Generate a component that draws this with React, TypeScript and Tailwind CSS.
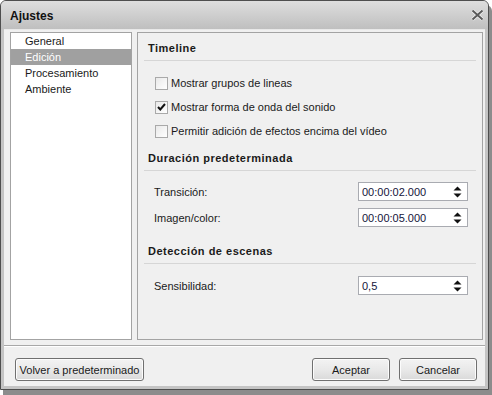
import React from "react";

const font = { fontFamily: '"Liberation Sans", Arial, sans-serif' };

function Check({ checked, label }: { checked?: boolean; label: string }) {
  return (
    <div className="h-[24px] flex items-center pl-[11px]">
      <div className="w-[13px] h-[13px] border border-[#a9a9a9] bg-gradient-to-br from-[#e9e9e9] to-white flex items-center justify-center">
        {checked && (
          <svg width="9" height="8" viewBox="0 0 9 8">
            <path d="M1 4 L3.3 6.5 L8 1" stroke="#111" strokeWidth="2" fill="none" strokeLinejoin="miter" />
          </svg>
        )}
      </div>
      <span className="ml-[3px] text-[11px] leading-[14px] text-[#1a1a1a]">{label}</span>
    </div>
  );
}

function Header({ label }: { label: string }) {
  return (
    <div className="mx-[6px] h-[28px] pl-[4px] pt-[8px] border-b border-[#d6d6d6]">
      <span className="text-[11px] leading-[14px] font-bold tracking-[0.5px] text-[#1a1a1a] block">{label}</span>
    </div>
  );
}

function Spin({ value }: { value: string }) {
  return (
    <div className="w-[110px] h-[19px] border border-[#a9abb1] bg-white flex items-center justify-between pl-[3px] pr-[5px]">
      <span className="text-[11px] leading-[14px] text-[#14143a]">{value}</span>
      <svg width="9" height="12" viewBox="0 0 9 12">
        <path d="M4.5 0.5 L8.5 4.5 L0.5 4.5 Z" fill="#111" />
        <path d="M0.5 7.5 L8.5 7.5 L4.5 11.5 Z" fill="#111" />
      </svg>
    </div>
  );
}

function FieldRow({ label, value, mt }: { label: string; value: string; mt: string }) {
  return (
    <div className={`${mt} mx-[6px] pl-[10px] pr-[8px] h-[19px] flex items-center justify-between`}>
      <span className="text-[11px] leading-[14px] text-[#1a1a1a]">{label}</span>
      <Spin value={value} />
    </div>
  );
}

function Button({ label, w }: { label: string; w: string }) {
  return (
    <div
      className={`${w} h-[23px] rounded-[3px] border border-[#707070] bg-gradient-to-b from-[#f3f3f3] via-[#e9e9e9] to-[#d9d9d9] flex items-center justify-center text-[11px] leading-[14px] text-[#1a1a1a] shadow-[inset_0_0_0_1px_#fcfcfc]`}
    >
      {label}
    </div>
  );
}

export default function App() {
  const items = ["General", "Edición", "Procesamiento", "Ambiente"];
  return (
    <div className="w-[492px] h-[395px] bg-white" style={font}>
      <div className="w-[489px] h-[390px] border border-[#4e4e4e] rounded-t-[6px] bg-[#c4c4c4] flex flex-col shadow-[3px_5px_0_#8c8c8c]">
        <div className="h-[28px] rounded-t-[5px] bg-gradient-to-b from-[#dedede] to-[#bfbfbf] flex items-center justify-between pl-[9px] pr-[3px]">
          <span className="text-[12px] font-bold text-[#111] leading-[14px] mt-[1px]">Ajustes</span>
          <svg width="13" height="12" viewBox="0 0 13 12" className="mr-[1px]">
            <path d="M1.5 1.5 L11.5 10.5 M11.5 1.5 L1.5 10.5" stroke="#f4f4f4" strokeWidth="3.4" />
            <path d="M1.5 1.5 L11.5 10.5 M11.5 1.5 L1.5 10.5" stroke="#5a5a5a" strokeWidth="2" />
          </svg>
        </div>
        <div className="flex-1 mx-[3px] mb-[3px] bg-[#f0f0f0] flex flex-col border-t border-[#e8e8e8]">
          <div className="flex mt-[2px] ml-[6px] gap-[5px]">
            <div className="w-[122px] h-[308px] border border-[#a3a3a3] bg-white">
              {items.map((it) => (
                <div
                  key={it}
                  className={`h-[16px] flex items-center pl-[14px] text-[11px] leading-[14px] ${
                    it === "Edición" ? "bg-[#a0a0a0] text-white" : "text-[#1a1a1a]"
                  }`}
                >
                  {it}
                </div>
              ))}
            </div>
            <div className="w-[346px] h-[308px] border border-[#a3a3a3] bg-[#f0f0f0] flex flex-col">
              <Header label="Timeline" />
              <div className="mt-[10px] mx-[6px]">
                <Check label="Mostrar grupos de lineas" />
                <Check checked label="Mostrar forma de onda del sonido" />
                <Check label="Permitir adición de efectos encima del vídeo" />
              </div>
              <Header label="Duración predeterminada" />
              <FieldRow mt="mt-[11px]" label="Transición:" value="00:00:02.000" />
              <FieldRow mt="mt-[7px]" label="Imagen/color:" value="00:00:05.000" />
              <div className="mt-[9px]">
                <Header label="Detección de escenas" />
              </div>
              <FieldRow mt="mt-[12px]" label="Sensibilidad:" value="0,5" />
            </div>
          </div>
          <div className="mt-[5px] border-t border-[#a8a8a8] border-b border-b-white" />
          <div className="mt-[11px] flex items-center pl-[11px] pr-[8px]">
            <Button label="Volver a predeterminado" w="w-[129px]" />
            <div className="flex-1" />
            <Button label="Aceptar" w="w-[78px]" />
            <div className="w-[9px]" />
            <Button label="Cancelar" w="w-[78px]" />
          </div>
        </div>
      </div>
    </div>
  );
}
